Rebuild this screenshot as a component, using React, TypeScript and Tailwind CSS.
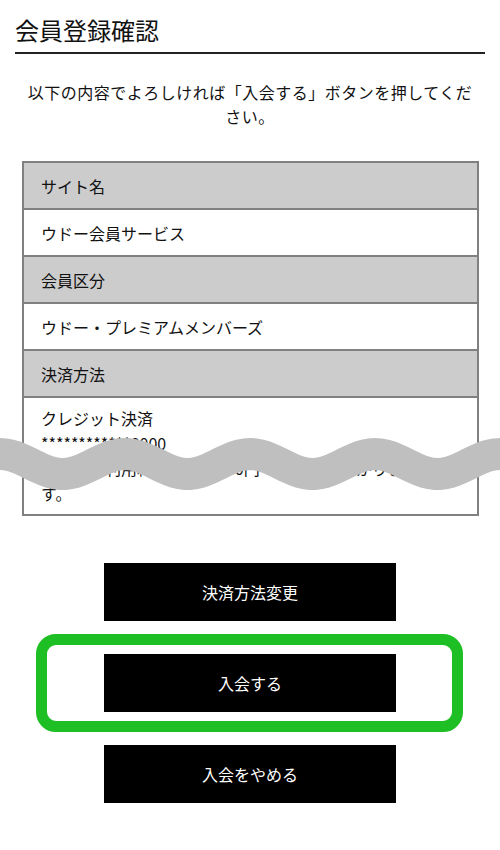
import React from "react";

// 波線（画像の「省略」表現）の中心線
const wavePoints = Array.from({ length: 109 }, (_, i) => {
  const x = -20 + i * 5;
  const y = 44 - 10 * Math.cos((2 * Math.PI * x) / 125);
  return `${x},${y.toFixed(2)}`;
}).join(" ");

const rows = [
  { label: "サイト名", value: "ウドー会員サービス" },
  { label: "会員区分", value: "ウドー・プレミアムメンバーズ" },
];

function Row({ children, head }: { children: React.ReactNode; head?: boolean }) {
  return (
    <div
      className={`h-[47px] flex items-center px-[17px] border-b-2 border-[#808080] text-[16px] text-[#111] ${
        head ? "bg-[#cccccc]" : "bg-white"
      }`}
    >
      {children}
    </div>
  );
}

function Button({ children }: { children: React.ReactNode }) {
  return (
    <button className="w-[292px] h-[58px] bg-black text-white text-[16px] flex items-center justify-center">
      {children}
    </button>
  );
}

export default function App() {
  return (
    <div
      className="relative w-[500px] min-h-[850px] bg-white text-[#111] overflow-hidden"
      style={{ fontFamily: '"Noto Sans CJK JP", "Noto Sans", sans-serif' }}
    >
      {/* タイトル */}
      <div className="px-[15px] pt-[13px]">
        <h1 className="text-[24px] leading-[34px] pb-[5px] border-b-2 border-[#222] font-normal">
          会員登録確認
        </h1>
      </div>

      <p className="mt-[26px] px-[22px] text-center text-[16px] leading-[24px] tracking-[0.5px]">
        以下の内容でよろしければ「入会する」ボタンを押してください。
      </p>

      {/* 確認テーブル */}
      <div className="mt-[33px] ml-[22px] w-[457px] border-2 border-b-0 border-[#808080]">
        {rows.map((r) => (
          <React.Fragment key={r.label}>
            <Row head>{r.label}</Row>
            <Row>{r.value}</Row>
          </React.Fragment>
        ))}
        <Row head>決済方法</Row>
        <div className="px-[17px] py-[8px] border-b-2 border-[#808080] text-[16px] leading-[25px]">
          <div>クレジット決済</div>
          <div>************0000</div>
          <div>毎月のご利用料金は月額500円（税込）がかかりま</div>
          <div>す。</div>
        </div>
      </div>

      {/* ボタン */}
      <div className="mt-[47px] flex flex-col items-center gap-[33px]">
        <Button>決済方法変更</Button>
        <div className="relative">
          <Button>入会する</Button>
          <div className="absolute left-[-68px] top-[-20px] w-[427px] h-[98px] border-[11px] border-[#1dbf24] rounded-[20px]" />
        </div>
        <Button>入会をやめる</Button>
      </div>

      {/* 波線オーバーレイ */}
      <svg
        className="absolute left-0 top-[420px]"
        width="500"
        height="90"
        viewBox="0 0 500 90"
      >
        <polyline
          points={wavePoints}
          fill="none"
          stroke="#bfbfbf"
          strokeWidth={32}
        />
      </svg>
    </div>
  );
}
